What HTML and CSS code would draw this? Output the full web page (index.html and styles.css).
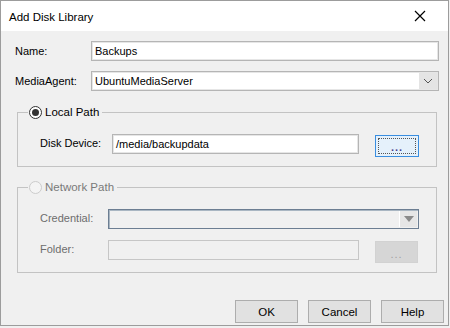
FILE: index.html
```html
<!DOCTYPE html>
<html lang="en">
<head>
  <meta charset="UTF-8" />
  <title>Add Disk Library</title>
  <link rel="stylesheet" href="styles.css">
</head>
<body>
  <div class="window">
    <div class="titlebar">
      <span class="title">Add Disk Library</span>
      <svg class="close" width="12" height="12" viewBox="0 0 12 12">
        <path d="M1 1 L11 11 M11 1 L1 11" stroke="#000" stroke-width="1.2" fill="none"/>
      </svg>
    </div>

    <div class="content">
      <div class="row">
        <span class="lbl">Name:</span>
        <div class="field wide">Backups</div>
      </div>
      <div class="row">
        <span class="lbl">MediaAgent:</span>
        <div class="field wide combo">
          <span class="val">UbuntuMediaServer</span>
          <span class="drop">
            <svg width="10" height="6" viewBox="0 0 10 6"><path d="M1 1 L5 5 L9 1" stroke="#555" stroke-width="1" fill="none"/></svg>
          </span>
        </div>
      </div>

      <fieldset class="group first">
        <legend><span class="radio on"></span>Local Path</legend>
        <div class="grow">
          <span class="glbl">Disk Device:</span>
          <div class="field path">/media/backupdata</div>
          <button class="browse focus"><span>...</span></button>
        </div>
      </fieldset>

      <fieldset class="group second off">
        <legend><span class="radio"></span>Network Path</legend>
        <div class="grow">
          <span class="glbl short">Credential:</span>
          <div class="field cred">
            <span class="val"></span>
            <span class="drop2">
              <svg width="10" height="6" viewBox="0 0 10 6"><path d="M0 0 L10 0 L5 6 Z" fill="#8a8a8a"/></svg>
            </span>
          </div>
        </div>
        <div class="grow">
          <span class="glbl short">Folder:</span>
          <div class="field folder"></div>
          <button class="browse dim"><span>...</span></button>
        </div>
      </fieldset>
    </div>

    <div class="actions">
      <button class="btn">OK</button>
      <button class="btn">Cancel</button>
      <button class="btn">Help</button>
    </div>
  </div>
</body>
</html>
```

FILE: styles.css
```css
body {
  margin: 0;
  background: #f0f0f0;
  font-family: "Liberation Sans", Arial, sans-serif;
  font-size: 11px;
  color: #000;
}
.window {
  width: 449px;
  height: 326px;
  box-sizing: border-box;
  border: 1px solid #9c9c9c;
  background: #f0f0f0;
  display: flex;
  flex-direction: column;
}
.titlebar {
  height: 30px;
  background: #fff;
  display: flex;
  align-items: center;
  justify-content: space-between;
  padding: 0 22px 0 8px;
}
.title {
  font-size: 11.5px;
  padding-top: 1px;
}
.content {
  padding: 10px 8px 0 14px;
}
.row {
  display: flex;
  align-items: center;
  height: 20px;
  margin-bottom: 10px;
}
.lbl {
  width: 76px;
}
.field {
  box-sizing: border-box;
  height: 20px;
  background: #fff;
  border: 1px solid #b5b5b5;
  box-shadow: inset 0 0 0 1px #e6e6e6;
  padding: 0 3px;
  display: flex;
  align-items: center;
}
.wide {
  width: 348px;
}
.combo {
  justify-content: space-between;
  padding-right: 1px;
}
.drop {
  width: 18px;
  height: 16px;
  background: #e4e4e4;
  display: flex;
  align-items: center;
  justify-content: center;
}

.group {
  margin: 13px 0 0 2px;
  width: 420px;
  box-sizing: border-box;
  border: 1px solid #c3c3c3;
  padding: 14px 17px 9px 22px;
}
.group legend {
  padding: 0 3px 0 1px;
  margin-left: -12px;
  height: 16px;
  display: flex;
  align-items: center;
  font-size: 11.5px;
}
.group.second {
  margin-top: 12px;
  padding-bottom: 9px;
}
.radio {
  width: 11px;
  height: 11px;
  border: 1px solid #333;
  border-radius: 50%;
  background: #fff;
  margin-right: 3px;
  position: relative;
  display: inline-block;
}
.radio.on::after {
  content: '';
  position: absolute;
  left: 2px;
  top: 2px;
  width: 7px;
  height: 7px;
  border-radius: 50%;
  background: #333;
}
.off legend {
  color: #7a7a7a;
}
.off .radio {
  border-color: #cccccc;
  background: #f4f4f4;
}
.grow {
  display: flex;
  align-items: flex-start;
}
.grow + .grow {
  margin-top: 11px;
}
.glbl {
  width: 72px;
  height: 20px;
  line-height: 18px;
}
.glbl.short {
  width: 68px;
}
.off .glbl {
  color: #6d6d6d;
}
.path {
  width: 247px;
}
.browse {
  box-sizing: border-box;
  width: 44px;
  height: 22px;
  margin: 1px 0 0 16px;
  padding: 2px;
  font-family: inherit;
  font-size: 11px;
  display: flex;
}
.browse span {
  flex: 1;
  display: flex;
  align-items: flex-end;
  justify-content: center;
  line-height: 12px;
  letter-spacing: 1px;
}
.browse.focus {
  border: 1px solid #3a8ee0;
  background: #e5f1fb;
  color: #4a3f8f;
  font-weight: bold;
}
.browse.focus span {
  border: 1px dotted #555;
}
.browse.dim {
  border: 1px solid #d2d2d2;
  background: #d6d6d6;
  color: #a0a0a0;
  width: 43px;
  margin-left: 16px;
}
.cred {
  width: 311px;
  border: 1px solid #6c7e92;
  box-shadow: inset 1px 1px 0 #a9b6c2;
  background: #f0f0f0;
  justify-content: flex-end;
  padding: 1px;
}
.drop2 {
  width: 17px;
  height: 16px;
  background: #e6e6e6;
  border-left: 1px solid #fff;
  display: flex;
  align-items: center;
  justify-content: center;
}
.folder {
  width: 251px;
  background: #f0f0f0;
  border-color: #c6c6c6;
  box-shadow: none;
}

.actions {
  display: flex;
  justify-content: flex-end;
  gap: 10px;
  padding: 27px 4px 0 0;
}
.btn {
  box-sizing: border-box;
  width: 63px;
  height: 23px;
  background: #e1e1e1;
  border: 1px solid #adadad;
  font-family: inherit;
  font-size: 11.5px;
  color: #000;
  padding: 0;
}
```
